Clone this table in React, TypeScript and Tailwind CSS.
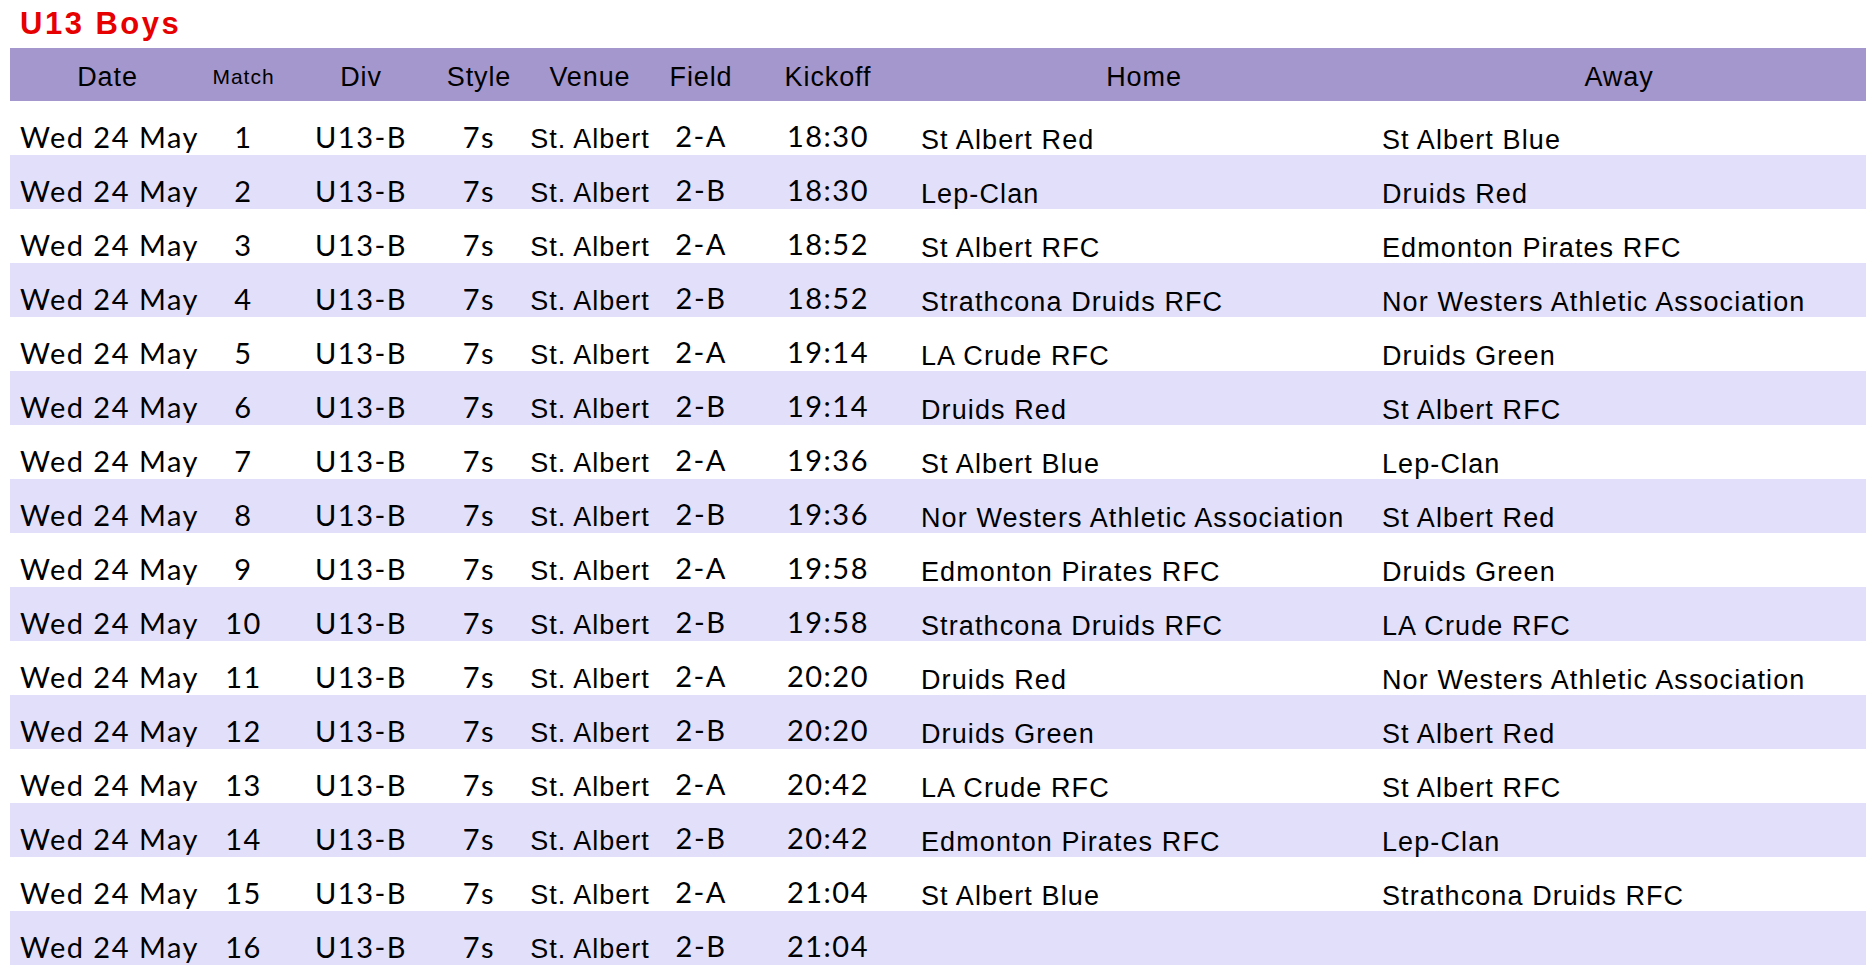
const fixtures: [string, string, string, string, string][] = [
  ["1", "2-A", "18:30", "St Albert Red", "St Albert Blue"],
  ["2", "2-B", "18:30", "Lep-Clan", "Druids Red"],
  ["3", "2-A", "18:52", "St Albert RFC", "Edmonton Pirates RFC"],
  ["4", "2-B", "18:52", "Strathcona Druids RFC", "Nor Westers Athletic Association"],
  ["5", "2-A", "19:14", "LA Crude RFC", "Druids Green"],
  ["6", "2-B", "19:14", "Druids Red", "St Albert RFC"],
  ["7", "2-A", "19:36", "St Albert Blue", "Lep-Clan"],
  ["8", "2-B", "19:36", "Nor Westers Athletic Association", "St Albert Red"],
  ["9", "2-A", "19:58", "Edmonton Pirates RFC", "Druids Green"],
  ["10", "2-B", "19:58", "Strathcona Druids RFC", "LA Crude RFC"],
  ["11", "2-A", "20:20", "Druids Red", "Nor Westers Athletic Association"],
  ["12", "2-B", "20:20", "Druids Green", "St Albert Red"],
  ["13", "2-A", "20:42", "LA Crude RFC", "St Albert RFC"],
  ["14", "2-B", "20:42", "Edmonton Pirates RFC", "Lep-Clan"],
  ["15", "2-A", "21:04", "St Albert Blue", "Strathcona Druids RFC"],
  ["16", "2-B", "21:04", "", ""],
];

const grid =
  "grid grid-cols-[195px_77px_158px_78px_144px_78px_176px_456px_494px]";

export default function App() {
  return (
    <div className="w-full min-h-screen bg-white px-[10px] text-black">
      {/* title */}
      <div className="h-[48px] pt-[8px] pl-[10px]">
        <h1 className="font-['Liberation_Sans',Arial,sans-serif] text-[31px] leading-none font-bold tracking-[2.5px] text-[#e60000]">
          U13 Boys
        </h1>
      </div>

      {/* header band */}
      <div
        className={`${grid} h-[53px] bg-[#a497cd] font-['Liberation_Sans',Arial,sans-serif] text-[27px] leading-none tracking-[0.9px]`}
      >
        <div className="flex items-center justify-center pt-[5px]">Date</div>
        <div className="flex items-center justify-center pt-[3px] text-[21px] tracking-[1px]">
          Match
        </div>
        <div className="flex items-center justify-center pt-[5px]">Div</div>
        <div className="flex items-center justify-center pt-[5px]">Style</div>
        <div className="flex items-center justify-center pt-[5px]">Venue</div>
        <div className="flex items-center justify-center pt-[5px]">Field</div>
        <div className="flex items-center justify-center pt-[5px]">Kickoff</div>
        <div className="flex items-center justify-center pt-[5px]">Home</div>
        <div className="flex items-center justify-center pt-[5px]">Away</div>
      </div>

      {/* rows */}
      {fixtures.map(([match, field, kickoff, home, away], i) => (
        <div
          key={match}
          className={`${grid} h-[54px] ${i % 2 === 1 ? "bg-[#e2dffb]" : "bg-white"}`}
        >
          <div className="flex items-end pb-[4px] pl-[10px] font-['Lato',sans-serif] text-[29px] leading-none tracking-[1.5px]">
            Wed 24 May
          </div>
          <div className="flex items-end justify-center pb-[4px] font-['Lato',sans-serif] text-[29px] leading-none tracking-[1.5px]">
            {match}
          </div>
          <div className="flex items-end justify-center pb-[4px] font-['Lato',sans-serif] text-[29px] leading-none tracking-[1.5px]">
            U13-B
          </div>
          <div className="flex items-end justify-center pb-[4px] font-['Lato',sans-serif] text-[29px] leading-none tracking-[1.5px]">
            7s
          </div>
          <div className="flex items-end justify-center pb-[2px] font-['Liberation_Sans',Arial,sans-serif] text-[27px] leading-none tracking-[1px]">
            St. Albert
          </div>
          <div className="flex items-end justify-center pb-[5px] font-['Lato',sans-serif] text-[29px] leading-none tracking-[1.5px]">
            {field}
          </div>
          <div className="flex items-end justify-center pb-[5px] font-['Lato',sans-serif] text-[29px] leading-none tracking-[1.5px]">
            {kickoff}
          </div>
          <div className="flex items-end pb-[1px] pl-[5px] font-['Liberation_Sans',Arial,sans-serif] text-[27px] leading-none tracking-[1.1px] whitespace-nowrap">
            {home}
          </div>
          <div className="flex items-end pb-[1px] pl-[10px] font-['Liberation_Sans',Arial,sans-serif] text-[27px] leading-none tracking-[1.1px] whitespace-nowrap">
            {away}
          </div>
        </div>
      ))}
    </div>
  );
}
